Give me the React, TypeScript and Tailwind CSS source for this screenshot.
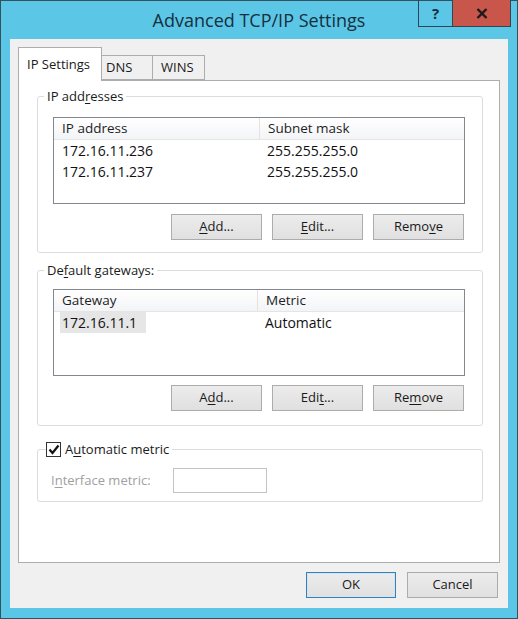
import type { ReactNode } from 'react';

const FONT = { fontFamily: '"Open Sans", "Noto Sans", "Liberation Sans", sans-serif' };

// Letter with access-key underline
function K({ children }: { children: ReactNode }) {
  return <span className="underline underline-offset-2 decoration-1">{children}</span>;
}

function Btn({ children, primary }: { children: ReactNode; primary?: boolean }) {
  return (
    <button
      className={
        'h-[26px] text-[13px] text-[#1a1a1a] bg-gradient-to-b from-[#ececec] to-[#e0e0e0] border ' +
        (primary ? 'w-[90px] border-[#3c7fb1] shadow-[inset_0_0_0_1px_#cfe4f4]' : 'w-[91px] border-[#acacac]')
      }
    >
      {children}
    </button>
  );
}

interface Col {
  title: string;
  width: string;
}

function ListView({ cols, rows, selected }: { cols: Col[]; rows: string[][]; selected?: boolean }) {
  return (
    <div className="h-[87px] border border-[#828790] bg-white">
      <div className="flex h-[22px] bg-gradient-to-b from-white to-[#f3f4f6] border-b border-[#e5e5e5] text-[13.5px] text-[#1e1e1e]">
        {cols.map((c, i) => (
          <div key={c.title} className={'flex items-center pl-[8px] ' + c.width + (i === 0 ? ' border-r border-[#e3e3e3]' : '')}>
            {c.title}
          </div>
        ))}
      </div>
      {rows.map((r, ri) => (
        <div key={ri} className="flex h-[21px] text-[14px] text-[#111]">
          {r.map((cell, ci) => (
            <div key={ci} className={'flex items-center ' + cols[ci].width + (ci === 0 ? ' pl-[6px]' : ' pl-[5px]')}>
              <span className={'px-[2px] h-[21px] flex items-center' + (selected && ci === 0 ? ' bg-[#e6e6e6] pr-[9px]' : '')}>
                {cell}
              </span>
            </div>
          ))}
        </div>
      ))}
    </div>
  );
}

function Group({ label, children, className }: { label: ReactNode; children: ReactNode; className?: string }) {
  return (
    <div className={'relative rounded-[3px] border border-[#dcdcdc] ' + (className ?? '')}>
      <div className="absolute -top-[11px] left-[6px] bg-white px-[3px] text-[13px] text-[#1a1a1a] leading-[20px]">{label}</div>
      {children}
    </div>
  );
}

export default function App() {
  return (
    <div style={FONT} className="w-[518px] h-[619px] bg-[#5cc6e7] border border-[#35515e] flex flex-col">
      {/* title bar */}
      <div className="relative h-[38px] shrink-0 flex items-center justify-center">
        <span className="text-[18px] text-[#15303d]">Advanced TCP/IP Settings</span>
        <div className="absolute top-[-1px] right-[6px] flex h-[27px] border border-[#2f4656] border-t-0">
          <div className="w-[34px] flex items-center justify-center text-[15px] font-bold text-[#15303d] border-r border-[#2f4656]">?</div>
          <div className="w-[57px] bg-[#c9564a] flex items-center justify-center">
            <svg width="12" height="11" viewBox="0 0 12 11">
              <path d="M1.5 1 L10.5 10 M10.5 1 L1.5 10" stroke="#1a1a1a" strokeWidth="2.4" />
            </svg>
          </div>
        </div>
      </div>

      {/* client area */}
      <div className="mx-[9px] mb-[10px] flex-1 bg-[#f0f0f0] flex flex-col px-[8px] pt-[9px]">
        {/* tabs */}
        <div className="flex items-end h-[33px] relative z-10 -mb-[1px]">
          <div className="w-[84px] h-[34px] bg-white border border-[#adadad] border-b-0 flex items-center pl-[8px] text-[13px] text-[#1a1a1a]">
            IP Settings
          </div>
          <div className="w-[51px] h-[25px] bg-[#f0f0f0] border border-[#adadad] border-l-0 mb-[1px] pl-[4px] flex items-center text-[13px] text-[#1a1a1a]">
            DNS
          </div>
          <div className="w-[52px] h-[25px] bg-[#f0f0f0] border border-[#adadad] border-l-0 mb-[1px] pl-[8px] flex items-center text-[13px] text-[#1a1a1a]">
            WINS
          </div>
        </div>

        <div className="h-[483px] bg-white border border-[#adadad] pl-[18px] pr-[16px] pt-[15px]">
          <Group label={<>IP add<K>r</K>esses</>} className="h-[157px] pl-[15px] pr-[17px] pt-[20px]">
            <ListView
              cols={[
                { title: 'IP address', width: 'w-[206px]' },
                { title: 'Subnet mask', width: 'flex-1' },
              ]}
              rows={[
                ['172.16.11.236', '255.255.255.0'],
                ['172.16.11.237', '255.255.255.0'],
              ]}
            />
            <div className="flex justify-end gap-[10px] mt-[10px] mr-[1px]">
              <Btn><K>A</K>dd...</Btn>
              <Btn><K>E</K>dit...</Btn>
              <Btn>Remo<K>v</K>e</Btn>
            </div>
          </Group>

          <Group label={<>De<K>f</K>ault gateways:</>} className="h-[156px] mt-[17px] pl-[15px] pr-[17px] pt-[18px]">
            <ListView
              cols={[
                { title: 'Gateway', width: 'w-[204px]' },
                { title: 'Metric', width: 'flex-1' },
              ]}
              rows={[['172.16.11.1', 'Automatic']]}
              selected
            />
            <div className="flex justify-end gap-[10px] mt-[9px] mr-[1px]">
              <Btn>A<K>d</K>d...</Btn>
              <Btn>Edi<K>t</K>...</Btn>
              <Btn>Re<K>m</K>ove</Btn>
            </div>
          </Group>

          <div className="relative mt-[23px] h-[53px] rounded-[3px] border border-[#dcdcdc]">
            <div className="absolute -top-[10px] left-[8px] bg-white pr-[3px] flex items-center gap-[4px] text-[13px] text-[#1a1a1a]">
              <div className="w-[15px] h-[15px] border border-[#333] bg-white flex items-center justify-center">
                <svg width="12" height="11" viewBox="0 0 12 11">
                  <path d="M1.5 5.5 L4.5 9 L10.5 1.5" fill="none" stroke="#111" strokeWidth="2.2" />
                </svg>
              </div>
              <span>A<K>u</K>tomatic metric</span>
            </div>
            <div className="flex items-center pl-[13px] pt-[18px]">
              <span className="w-[122px] text-[13px] text-[#a0a0a0]">
                I<K>n</K>terface metric:
              </span>
              <div className="w-[94px] h-[25px] border border-[#c4c4c4] bg-white" />
            </div>
          </div>
        </div>

        {/* footer */}
        <div className="flex justify-end gap-[11px] pt-[9px] pr-[2px]">
          <Btn primary>OK</Btn>
          <Btn primary={false}>Cancel</Btn>
        </div>
      </div>
    </div>
  );
}
